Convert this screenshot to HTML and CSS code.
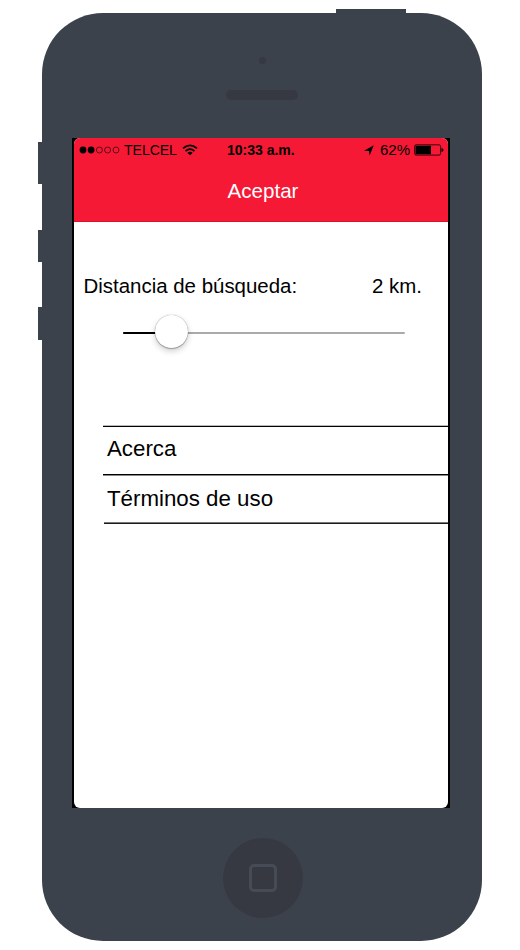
FILE: index.html
```html
<!DOCTYPE html>
<html lang="es">
<head>
<meta charset="utf-8">
<title>Ajustes</title>
<link rel="stylesheet" href="styles.css">
</head>
<body>
<div class="phone">
  <i class="key power"></i>
  <i class="key mute"></i>
  <i class="key vol-up"></i>
  <i class="key vol-down"></i>
  <div class="top">
    <i class="camera"></i>
    <i class="speaker"></i>
  </div>
  <div class="bezel">
    <main class="screen">
      <header class="header">
        <div class="status">
          <div class="carrier">
            <svg class="signal" width="42" height="10" viewBox="0 0 42 10">
              <circle cx="4" cy="5" r="3.4"/><circle cx="12.1" cy="5" r="3.4"/>
              <g fill="none" stroke="#000" stroke-width=".6"><circle cx="20.4" cy="5" r="3"/><circle cx="28.6" cy="5" r="3"/><circle cx="37" cy="5" r="3"/></g>
            </svg>
            <span class="operator">TELCEL</span>
            <svg class="wifi" width="16" height="12" viewBox="0 0 16 12">
              <g fill="none" stroke="#000" stroke-width="1.7"><path d="M1 4.3Q8-1.7 15 4.3"/><path d="M3.5 7.1Q8 3.2 12.5 7.1"/></g>
              <path d="M5.3 8.8Q8 6.8 10.7 8.8L8 11.3Z"/>
            </svg>
          </div>
          <span class="time">10:33 a.m.</span>
          <div class="power-info">
            <svg class="arrow" width="12" height="11" viewBox="0 0 12 11"><path d="M10.8.3 6.6 10.6 6 5.9 1 5.7Z"/></svg>
            <span class="percent">62%</span>
            <svg class="battery" width="30" height="12" viewBox="0 0 30 12">
              <rect x=".6" y=".8" width="26" height="10.3" rx="1.6" fill="none" stroke="#000" stroke-width=".8"/>
              <path d="M1.5 1.7H17V10.2H1.5ZM27.5 4Q29.5 4.5 29.5 6T27.5 8Z"/>
            </svg>
          </div>
        </div>
        <div class="title">Aceptar</div>
      </header>
      <section class="distance">
        <div class="distance-row"><span>Distancia de búsqueda:</span><span>2 km.</span></div>
        <div class="slider"><i class="fill"></i><i class="thumb"></i></div>
      </section>
      <nav class="menu">
        <div class="item about">Acerca</div>
        <div class="item terms">Términos de uso</div>
        <i class="end"></i>
      </nav>
    </main>
  </div>
  <div class="home"><i class="home-icon"></i></div>
</div>
</body>
</html>
```
FILE: styles.css
```css
* { box-sizing: border-box; }
body { margin: 0; background: #fff; color: #000; font-family: "Liberation Sans", Arial, sans-serif; }
i { display: block; }
.phone {
  position: relative;
  width: 440.5px;
  height: 928px;
  margin: 13px 0 0 41.5px;
  border-radius: 61px;
  background: #3c424c;
}
.key { position: absolute; left: -3.5px; width: 6px; background: #3c424c; }
.power { left: 294.5px; top: -4px; width: 70px; height: 8px; }
.mute { top: 129px; height: 42px; }
.vol-up { top: 217px; height: 32px; }
.vol-down { top: 294px; height: 33px; }
.top { height: 125px; display: flex; flex-direction: column; align-items: center; padding-top: 43.5px; }
.camera { width: 7px; height: 7px; border-radius: 50%; background: #363942; margin-left: 1px; }
.speaker { width: 72px; height: 10px; margin-top: 26.5px; border-radius: 5px; background: #363942; }
.bezel { width: 378px; height: 670px; margin-left: 30.5px; padding: 0 2px; background: #000; }
.screen { height: 670px; border-radius: 6px; overflow: hidden; background: #fff; }
.header { height: 84px; background: #f51936; border-bottom: 1px solid #e3102c; }
.status { display: grid; grid-template-columns: 153px 89px 1fr; height: 24px; align-items: center; font-size: 14px; line-height: 24px; }
.carrier, .power-info { display: flex; align-items: center; }
.signal { margin-left: 5px; }
.operator { margin-left: 3px; }
.wifi { margin-left: 5px; }
.time { font-weight: bold; }
.power-info { padding-left: 47px; }
.percent { margin-left: 5px; font-size: 15px; }
.battery { margin-left: 4px; }
.title { padding-left: 4px; text-align: center; color: #fff; font-size: 20.6px; line-height: 24px; margin-top: 17px; }
.distance { height: 204px; padding-top: 52px; }
.distance-row { display: flex; justify-content: space-between; padding: 0 26px 0 9.5px; font-size: 20.45px; line-height: 24px; }
.slider { position: relative; width: 282px; height: 2px; margin: 34px 0 0 49px; background: #aaa; border-radius: 1px; }
.fill { width: 40px; height: 2px; background: #000; border-radius: 1px; }
.thumb {
  position: absolute; left: 32px; top: -17px; width: 33px; height: 33px;
  border-radius: 50%; background: #fff;
  box-shadow: 0 0 1px rgba(0,0,0,.45), 0 1px 1px rgba(0,0,0,.25), 0 3px 6px rgba(0,0,0,.2);
}
.menu { margin-left: 29px; }
.item { padding-left: 4px; border-top: 1px solid #000; font-size: 22.3px; }
.about { height: 48px; line-height: 44px; box-shadow: 0 -1px #bbb; }
.terms { height: 49px; line-height: 47px; box-shadow: inset 0 1px #888; }
.end { height: 1px; margin-left: 1px; background: #1a1a1a; box-shadow: 0 -1px #777; }
.home {
  width: 80px; height: 80px; margin: 29.5px 0 0 181px; border-radius: 50%;
  background: #363942; display: flex; align-items: center; justify-content: center;
}
.home-icon { width: 28px; height: 28px; border: 3px solid #474b55; border-radius: 5px; }
```
